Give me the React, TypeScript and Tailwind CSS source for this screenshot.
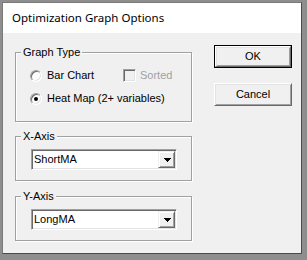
import React from "react";

const ui = { fontFamily: '"Liberation Sans", Arial, sans-serif' };

function Radio({ checked }: { checked?: boolean }) {
  return (
    <span className="flex h-[12px] w-[12px] shrink-0 items-center justify-center rounded-full border border-t-[#a0a0a0] border-l-[#a0a0a0] border-r-white border-b-white bg-white shadow-[inset_1px_1px_0_#696969,inset_-1px_-1px_0_#e3e3e3]">
      {checked && <span className="h-[4px] w-[4px] rounded-full bg-black" />}
    </span>
  );
}

function GroupBox({ label, className, children }: { label: string; className: string; children: React.ReactNode }) {
  return (
    <div className={"relative border border-[#a0a0a0] shadow-[1px_1px_0_#fff,inset_1px_1px_0_#fff] " + className}>
      <span className="absolute -top-[7px] left-[5px] bg-[#f0f0f0] px-[2px] text-[11px] leading-[13px] text-black">
        {label}
      </span>
      {children}
    </div>
  );
}

function Combo({ value }: { value: string }) {
  return (
    <div className="ml-[15px] mt-[12px] flex h-[21px] w-[146px] border border-t-[#a0a0a0] border-l-[#a0a0a0] border-r-white border-b-white bg-white shadow-[inset_1px_1px_0_#696969,inset_-1px_-1px_0_#e3e3e3] p-[1px]">
      <div className="flex flex-1 items-center pl-[1px] text-[11px] leading-[13px]">{value}</div>
      <div className="flex h-[17px] w-[17px] items-center justify-center border border-t-[#f0f0f0] border-l-[#f0f0f0] border-r-[#696969] border-b-[#696969] bg-[#f0f0f0] shadow-[inset_1px_1px_0_#fff,inset_-1px_-1px_0_#a0a0a0]">
        <svg width="7" height="4" viewBox="0 0 7 4" shapeRendering="crispEdges" className="ml-[1px]">
          <rect x="0" y="0" width="7" height="1" fill="#000" />
          <rect x="1" y="1" width="5" height="1" fill="#000" />
          <rect x="2" y="2" width="3" height="1" fill="#000" />
          <rect x="3" y="3" width="1" height="1" fill="#000" />
        </svg>
      </div>
    </div>
  );
}

export default function App() {
  return (
    <div className="h-[260px] w-[307px] bg-[#8e8e8e] pl-[2px] pt-[2px]" style={ui}>
      <div className="flex h-[252px] w-[300px] flex-col border border-t-[#7a7a7a] border-l-[#7a7a7a] border-r-[#4a4a4a] border-b-[#4a4a4a]">
        {/* Title bar */}
        <div className="flex h-[30px] items-center bg-white pl-[9px]">
          <span className="text-[11.5px] leading-[16px] text-black" style={{ fontFamily: '"Noto Sans", sans-serif' }}>
            Optimization Graph Options
          </span>
        </div>

        {/* Body */}
        <div className="flex flex-1 items-start bg-[#f0f0f0] pl-[12px] text-black">
          <div className="mt-[19px] w-[177px]">
            <GroupBox label="Graph Type" className="h-[70px]">
              <div className="ml-[14px] mt-[16px] flex h-[13px] items-center">
                <div className="flex w-[93px] items-center">
                  <Radio />
                  <span className="ml-[5px] text-[11px] leading-[13px]">Bar Chart</span>
                </div>
                <span className="h-[13px] w-[13px] border border-t-[#a0a0a0] border-l-[#a0a0a0] border-r-white border-b-white bg-[#f0f0f0] shadow-[inset_1px_1px_0_#696969,inset_-1px_-1px_0_#e3e3e3]" />
                <span className="ml-[4px] text-[11px] leading-[13px] text-[#a0a0a0]">Sorted</span>
              </div>
              <div className="ml-[14px] mt-[10px] flex h-[13px] items-center">
                <Radio checked />
                <span className="ml-[5px] text-[11px] leading-[13px]">Heat Map (2+ variables)</span>
              </div>
            </GroupBox>

            <GroupBox label="X-Axis" className="mt-[14px] h-[45px]">
              <Combo value="ShortMA" />
            </GroupBox>

            <GroupBox label="Y-Axis" className="mt-[15px] h-[45px]">
              <Combo value="LongMA" />
            </GroupBox>
          </div>

          <div className="ml-[22px] mt-[12px] flex w-[78px] flex-col">
            <button className="h-[23px] w-[78px] border border-black p-0 text-[11px]">
              <div className="flex h-full w-full items-center justify-center border border-t-white border-l-white border-r-[#696969] border-b-[#696969] bg-[#f0f0f0] shadow-[inset_1px_1px_0_#e3e3e3,inset_-1px_-1px_0_#a0a0a0]">
                OK
              </div>
            </button>
            <button className="mt-[15px] flex h-[23px] w-[78px] items-center justify-center border border-t-white border-l-white border-r-[#696969] border-b-[#696969] bg-[#f0f0f0] text-[11px] shadow-[inset_1px_1px_0_#e3e3e3,inset_-1px_-1px_0_#a0a0a0]">
              Cancel
            </button>
          </div>
        </div>
      </div>
    </div>
  );
}
